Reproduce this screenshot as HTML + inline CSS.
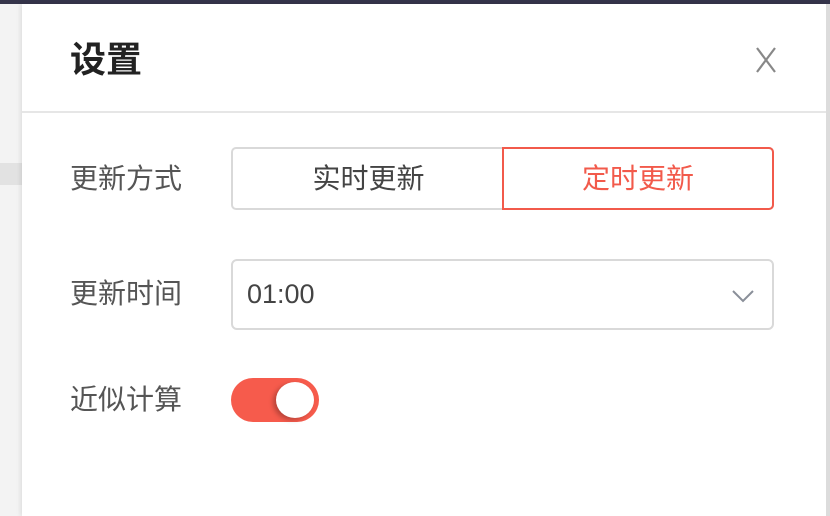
<!DOCTYPE html>
<html><head><meta charset="utf-8"><style>
*{margin:0;padding:0;box-sizing:border-box}
body{width:830px;height:516px;overflow:hidden;background:#f3f3f3;font-family:"Liberation Sans","Noto Sans CJK SC",sans-serif;position:relative}
.top{position:absolute;left:0;top:0;width:830px;height:4px;background:#35344a}
.lstrip{position:absolute;left:0;top:163px;width:22px;height:22px;background:#e2e2e2}
.panel{position:absolute;left:22px;top:4px;width:804px;height:512px;background:#fff;box-shadow:-2px 0 4px rgba(0,0,0,.08)}
.rstrip{position:absolute;left:826px;top:4px;width:4px;height:512px;background:#dcdcdc}
.title{position:absolute;left:70px;top:38px;font-size:36px;font-weight:bold;color:#222;line-height:44px}
.hr{position:absolute;left:22px;top:111px;width:804px;height:2px;background:#e6e6e6}
.lbl{position:absolute;left:70px;font-size:28px;color:#555;line-height:36px}
.seg{position:absolute;left:231px;top:147px;width:543px;height:63px;border:2px solid #d9d9d9;border-radius:5px}
.seg .a{position:absolute;left:0;top:0;width:271px;height:59px;text-align:center;line-height:59px;font-size:28px;color:#444}
.seg .b{position:absolute;left:269px;top:-2px;width:272px;height:63px;border:2px solid #f25a4b;border-radius:0 5px 5px 0;text-align:center;line-height:59px;font-size:28px;color:#f25a4b}
.sel{position:absolute;left:231px;top:259px;width:543px;height:71px;border:2px solid #d9d9d9;border-radius:6px;font-size:27px;color:#444;line-height:67px;padding-left:14px}
.tog{position:absolute;left:231px;top:378px;width:88px;height:44px;border-radius:22px;background:#f65b4c}
.knob{position:absolute;left:45px;top:4px;width:38px;height:36px;border-radius:50%;background:#fff;box-shadow:-3px 2px 5px rgba(0,0,0,.25)}
</style></head><body>
<div class="top"></div>
<div class="lstrip"></div>
<div class="panel"></div>
<div class="rstrip"></div>
<div class="title">设置</div>
<svg style="position:absolute;left:753px;top:47px" width="26" height="26"><path d="M4 1L22 25M22 1L4 25" stroke="#888" stroke-width="2.2" fill="none"/></svg>
<div class="hr"></div>
<div class="lbl" style="top:161px">更新方式</div>
<div class="seg"><div class="a">实时更新</div><div class="b">定时更新</div></div>
<div class="lbl" style="top:276px">更新时间</div>
<div class="sel">01:00</div>
<svg style="position:absolute;left:731px;top:288px" width="24" height="16"><path d="M2 3L12 13L22 3" stroke="#8a8f99" stroke-width="2" fill="none"/></svg>
<div class="lbl" style="top:382px">近似计算</div>
<div class="tog"><div class="knob"></div></div>
</body></html>
